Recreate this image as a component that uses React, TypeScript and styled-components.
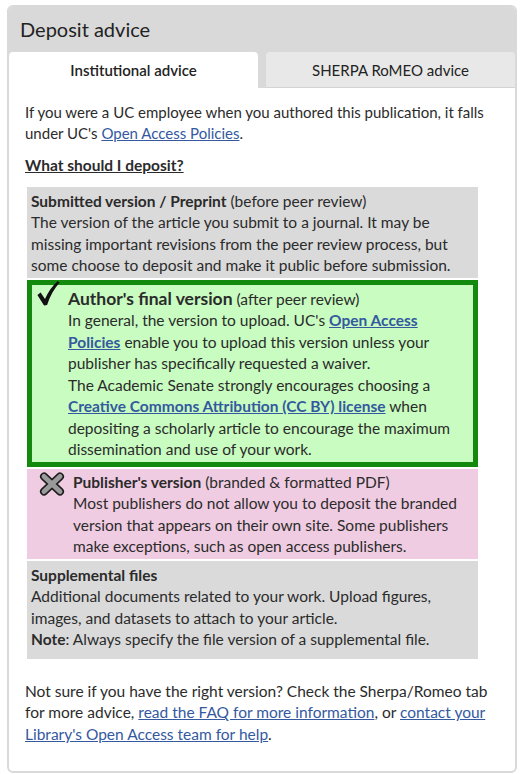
import styled, { createGlobalStyle } from "styled-components";

const Global = createGlobalStyle`
  body {
    margin: 0;
    background: #fff;
    font-family: Lato, "Open Sans", sans-serif;
    color: #2b2b2b;
  }
`

const Page = styled.div`
  padding: 5px 6px 3px 7px;
`

const Card = styled.div`
  border: 2px solid #d9d9d9;
  border-radius: 6px;
  background: #fff;
  overflow: hidden;
`

const Header = styled.div`
  background: #d9d9d9;
`

const Title = styled.h2`
  margin: 0;
  padding: 10px 11px 0;
  height: 45px;
  box-sizing: border-box;
  font-size: 20px;
  font-weight: 400;
  color: #222;
`

const Tabs = styled.div`
  display: flex;
  gap: 8px;
`

const Tab = styled.div<{ active?: boolean }>`
  flex: 1;
  height: 36px;
  display: flex;
  align-items: center;
  justify-content: center;
  font-size: 15px;
  font-weight: ${p => p.active ? 600 : 400};
  background: ${p => p.active ? '#fff' : '#e8e8e8'};
  border-radius: 4px 4px 0 0;
  border-bottom: ${p => p.active ? 'none' : '1px solid #d4d4d4'};
  box-sizing: border-box;
  color: #222;
`

const Body = styled.div`
  padding: 14px 16px 26px;
  font-size: 15.5px;
  line-height: 21.5px;
`

const Para = styled.p`
  margin: 0 0 12px;
  font-size: 15px;
  line-height: 20.5px;
`

const Link = styled.a<{ strong?: boolean }>`
  color: #34599f;
  text-decoration: underline;
  font-weight: ${p => p.strong ? 700 : 400};
`

const Question = styled.div`
  font-weight: 700;
  text-decoration: underline;
  margin-bottom: 10px;
`

const List = styled.div`
  display: flex;
  flex-direction: column;
  gap: 2px;
  margin: 0 21px 0 2px;
`

type Tone = 'gray' | 'green' | 'pink' | 'note'

const tones: Record<Tone, { bg: string; pad: string }> = {
  gray: { bg: '#dadada', pad: '4px 13px 1px 4px' },
  note: { bg: '#dadada', pad: '4px 13px 8px 4px' },
  green: { bg: '#c8fcc0', pad: '3px 10px 1px 0' },
  pink: { bg: '#f0cce2', pad: '3px 11px 1px 4px' },
}

const Option = styled.div<{ tone: Tone }>`
  display: flex;
  background: ${p => tones[p.tone].bg};
  border: ${p => p.tone === 'green' ? '5px solid #138a0d' : 'none'};
  padding: ${p => tones[p.tone].pad};
`

const IconCell = styled.div<{ w: number }>`
  flex: 0 0 ${p => p.w}px;
  display: flex;
  justify-content: center;
  align-items: flex-start;
`

const OptionText = styled.div`
  flex: 1;
`

const Heading = styled.b<{ big?: boolean }>`
  font-size: ${p => p.big ? '17.5px' : 'inherit'};
`

const Footer = styled.p`
  margin: 22px 0 0;
`

const CheckIcon = () => (
  <svg width="23" height="25" viewBox="0 0 24 27" style={{ marginTop: -7, marginLeft: -3 }}>
    <path
      d="M0 15 L3.5 12.5 L8.2 19.5 C11.5 12 16 5.5 22 0 L24 1.6 C18.5 8 13.5 16 10.5 26 L7.2 26.5 Z"
      fill="#111"
    />
  </svg>
)

const CrossIcon = () => (
  <svg width="26" height="24" viewBox="0 0 26 24">
    <g strokeLinecap="round">
      <path d="M5 4.5 L21 19.5 M21 4.5 L5 19.5" stroke="#1a1a1a" strokeWidth="8" />
      <path d="M5 4.5 L21 19.5 M21 4.5 L5 19.5" stroke="#9a9a9a" strokeWidth="5" />
    </g>
  </svg>
)

export default function App() {
  return (
    <Page>
      <Global />
      <Card>
        <Header>
          <Title>Deposit advice</Title>
          <Tabs>
            <Tab active>Institutional advice</Tab>
            <Tab>SHERPA RoMEO advice</Tab>
          </Tabs>
        </Header>
        <Body>
          <Para>
            If you were a UC employee when you authored this publication, it falls under UC's{' '}
            <Link href="#">Open Access Policies</Link>.
          </Para>
          <Question>What should I deposit?</Question>
          <List>
            <Option tone="gray">
              <OptionText>
                <Heading>Submitted version / Preprint</Heading> (before peer review)<br />
                The version of the article you submit to a journal. It may be missing important revisions from the peer review process, but some choose to deposit and make it public before submission.
              </OptionText>
            </Option>
            <Option tone="green">
              <IconCell w={36}><CheckIcon /></IconCell>
              <OptionText>
                <Heading big>Author's final version</Heading> (after peer review)<br />
                In general, the version to upload. UC's <Link href="#" strong>Open Access Policies</Link> enable you to upload this version unless your publisher has specifically requested a waiver.<br />
                The Academic Senate strongly encourages choosing a <Link href="#" strong>Creative Commons Attribution (CC BY) license</Link> when depositing a scholarly article to encourage the maximum dissemination and use of your work.
              </OptionText>
            </Option>
            <Option tone="pink">
              <IconCell w={42}><CrossIcon /></IconCell>
              <OptionText>
                <Heading>Publisher's version</Heading> (branded &amp; formatted PDF)<br />
                Most publishers do not allow you to deposit the branded version that appears on their own site. Some publishers make exceptions, such as open access publishers.
              </OptionText>
            </Option>
            <Option tone="note">
              <OptionText>
                <Heading>Supplemental files</Heading><br />
                Additional documents related to your work. Upload figures, images, and datasets to attach to your article.<br />
                <b>Note</b>: Always specify the file version of a supplemental file.
              </OptionText>
            </Option>
          </List>
          <Footer>
            Not sure if you have the right version? Check the Sherpa/Romeo tab for more advice,{' '}
            <Link href="#">read the FAQ for more information</Link>, or{' '}
            <Link href="#">contact your Library's Open Access team for help</Link>.
          </Footer>
        </Body>
      </Card>
    </Page>
  )
}
